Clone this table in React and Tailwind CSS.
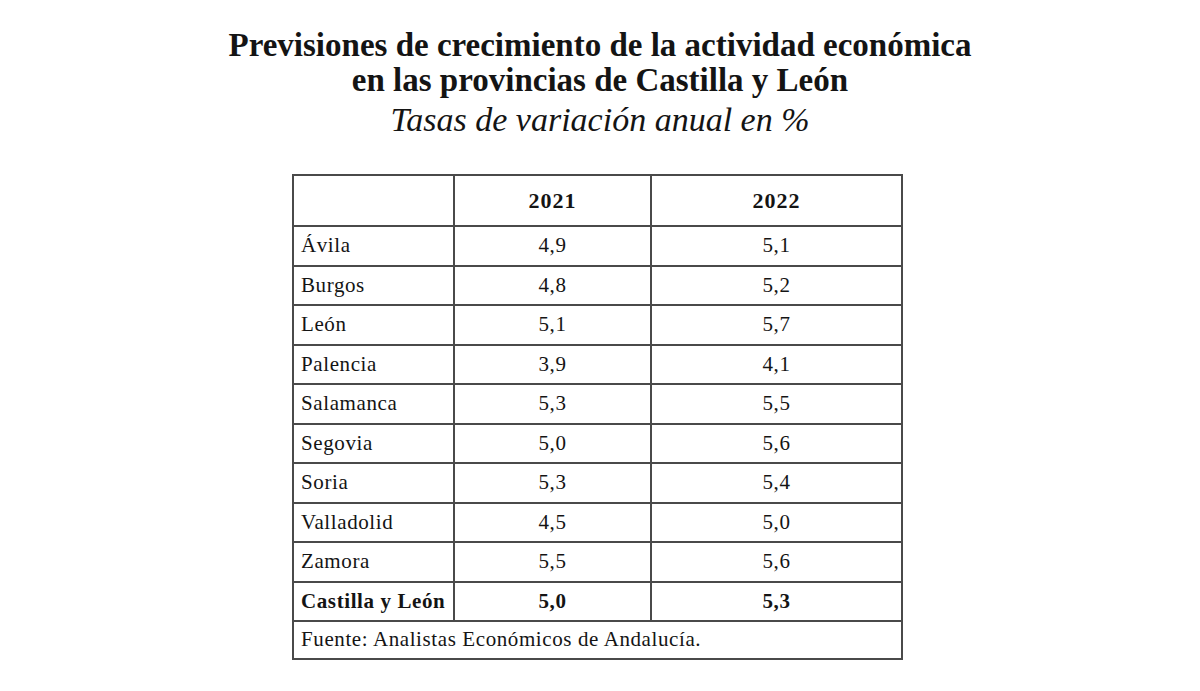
const ROWS = [
  ["Ávila", "4,9", "5,1"],
  ["Burgos", "4,8", "5,2"],
  ["León", "5,1", "5,7"],
  ["Palencia", "3,9", "4,1"],
  ["Salamanca", "5,3", "5,5"],
  ["Segovia", "5,0", "5,6"],
  ["Soria", "5,3", "5,4"],
  ["Valladolid", "4,5", "5,0"],
  ["Zamora", "5,5", "5,6"],
];

export default function App() {
  return (
    <div className="w-[1200px] h-[691px] bg-white text-[#141414] font-['Liberation_Serif',serif] flex flex-col items-center">
      <div className="pt-[28px] flex flex-col items-center">
        <h1 className="text-[33px] leading-[35px] font-bold text-center">
          Previsiones de crecimiento de la actividad económica
          <br />
          en las provincias de Castilla y León
        </h1>
        <p className="mt-[2px] text-[34px] leading-[40px] italic">Tasas de variación anual en %</p>
      </div>

      <table className="mt-[34px] ml-[-5px] border-collapse border-2 border-[#4a4a4a] text-[21px] tracking-[0.6px]">
        <colgroup>
          <col className="w-[161px]" />
          <col className="w-[197px]" />
          <col className="w-[251px]" />
        </colgroup>
        <thead>
          <tr className="h-[51px] font-bold text-[22px] tracking-[1px]">
            <th className="border-2 border-[#4a4a4a]"></th>
            <th className="border-2 border-[#4a4a4a] text-center">2021</th>
            <th className="border-2 border-[#4a4a4a] text-center">2022</th>
          </tr>
        </thead>
        <tbody>
          {ROWS.map(([name, a, b]) => (
            <tr key={name} className="h-[39.5px]">
              <td className="border-2 border-[#4a4a4a] px-[7px]">{name}</td>
              <td className="border-2 border-[#4a4a4a] text-center">{a}</td>
              <td className="border-2 border-[#4a4a4a] text-center">{b}</td>
            </tr>
          ))}
          <tr className="h-[39.5px] font-bold">
            <td className="border-2 border-[#4a4a4a] px-[7px]">Castilla y León</td>
            <td className="border-2 border-[#4a4a4a] text-center">5,0</td>
            <td className="border-2 border-[#4a4a4a] text-center">5,3</td>
          </tr>
          <tr className="h-[38px]">
            <td colSpan={3} className="border-2 border-[#4a4a4a] px-[7px]">
              Fuente: Analistas Económicos de Andalucía.
            </td>
          </tr>
        </tbody>
      </table>
    </div>
  );
}
